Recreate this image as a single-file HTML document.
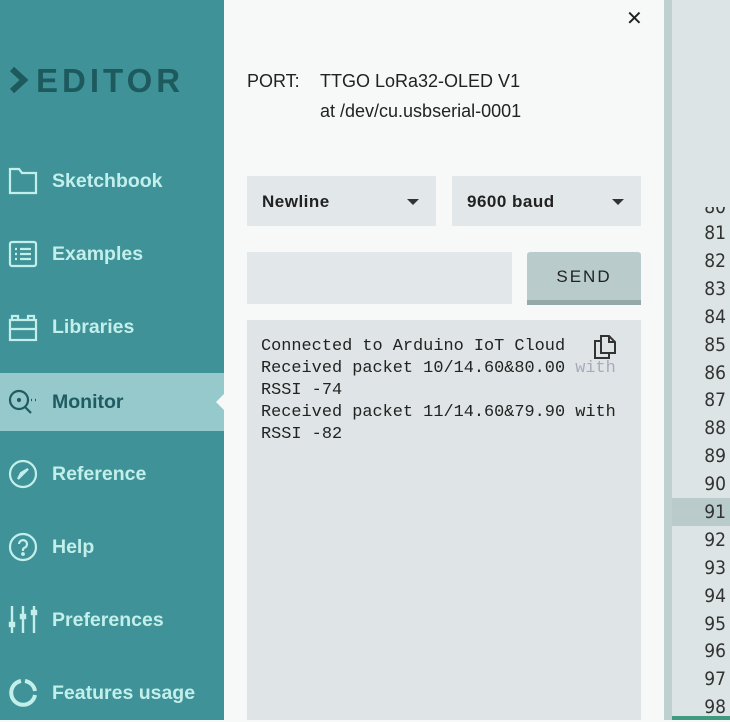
<!DOCTYPE html>
<html><head><style>
*{margin:0;padding:0;box-sizing:border-box}
body{width:730px;height:720px;overflow:hidden;position:relative;font-family:"Liberation Sans",sans-serif;background:#f7f9f9}
#side{position:absolute;left:0;top:0;width:224px;height:720px;background:#3f9298}
.logo{position:absolute;left:8px;top:62px;font-size:33px;font-weight:bold;color:#1d5a5e;letter-spacing:4px}
.item{position:absolute;left:0;width:224px;height:58px;color:#c3efeb;font-weight:bold;font-size:19.5px}
.item span{position:absolute;left:52px;top:18px}
.item svg{position:absolute;left:8px;top:14px}
.sel{background:#95c9cc;color:#1f5c62}
.sel:after{content:"";position:absolute;right:0;top:21px;border:8px solid transparent;border-right-color:#f7f9f9}
#panel{position:absolute;left:224px;top:0;width:440px;height:720px;background:#f7f9f9}
.t{position:absolute;font-size:18px;color:#222}
.dd{position:absolute;top:176px;width:189px;height:50px;background:#e2e8e9;font-weight:bold;font-size:17px;color:#222;padding:16px 15px;letter-spacing:.5px}
.dd:after{content:"";position:absolute;right:17px;top:23px;border:6px solid transparent;border-top-color:#333;border-bottom:0}
#out{position:absolute;left:247px;top:320px;width:394px;height:400px;background:#dfe5e6;font-family:"Liberation Mono",monospace;font-size:16.9px;color:#222;padding:16px 14px;line-height:22px;white-space:pre}
#div{position:absolute;left:664px;top:0;width:8px;height:720px;background:#bfd0d1}
#gut{position:absolute;left:672px;top:0;width:58px;height:720px;background:#dde4e5}
.n{position:absolute;right:4px;font-size:19px;color:#333;font-family:"DejaVu Sans Condensed","Liberation Sans",sans-serif}
</style></head><body>
<div id="side">
<div class="logo"><svg width="22" height="28" viewBox="0 0 22 28" style="vertical-align:-2px;margin-right:6px"><path d="M4 3l12 11-12 11" stroke="#1d5a5e" stroke-width="6" fill="none"/></svg>EDITOR</div>
<div class="item" style="top:152px"><svg width="30" height="30" viewBox="0 0 30 30" fill="none" stroke="#c3efeb" stroke-width="2.2"><path d="M2 3h9l3 4h14v20H2z"/></svg><span>Sketchbook</span></div>
<div class="item" style="top:225px"><svg width="30" height="30" viewBox="0 0 30 30" fill="none" stroke="#c3efeb" stroke-width="2.2"><rect x="2" y="3" width="26" height="24" rx="2"/><path d="M7 10h2M12 10h11M7 15h2M12 15h11M7 20h2M12 20h11"/></svg><span>Examples</span></div>
<div class="item" style="top:298px"><svg width="30" height="30" viewBox="0 0 30 30" fill="none" stroke="#c3efeb" stroke-width="2.2"><path d="M4 8V4h6v4M20 8V4h6v4"/><rect x="2" y="8" width="26" height="20"/><path d="M2 17h26"/></svg><span>Libraries</span></div>
<div class="item sel" style="top:373px"><svg width="30" height="30" viewBox="0 0 30 30" fill="none" stroke="#1f5c62" stroke-width="2.2"><circle cx="11" cy="13" r="9"/><path d="M17 20l6 6"/><circle cx="11" cy="13" r="1" fill="#1f5c62"/><path d="M23 13h1M27 13h1"/></svg><span>Monitor</span></div>
<div class="item" style="top:445px"><svg width="30" height="30" viewBox="0 0 30 30" fill="none" stroke="#c3efeb" stroke-width="2.2"><circle cx="15" cy="15" r="13"/><path d="M20 10l-7 7-3 3 3-6z"/></svg><span>Reference</span></div>
<div class="item" style="top:518px"><svg width="30" height="30" viewBox="0 0 30 30" fill="none" stroke="#c3efeb" stroke-width="2.2"><circle cx="15" cy="15" r="13"/><path d="M11 12a4 4 0 1 1 5 4c-1 .5-1 1-1 3"/><circle cx="15" cy="22" r=".8" fill="#c3efeb"/></svg><span>Help</span></div>
<div class="item" style="top:591px"><svg width="30" height="30" viewBox="0 0 30 30" fill="none" stroke="#c3efeb" stroke-width="2.4"><path d="M4 1v16M4 22v6M15 1v8M15 14v14M26 1v4M26 10v18"/><rect x="2" y="18" width="4" height="3" fill="#c3efeb"/><rect x="13" y="10" width="4" height="3" fill="#c3efeb"/><rect x="24" y="6" width="4" height="3" fill="#c3efeb"/></svg><span>Preferences</span></div>
<div class="item" style="top:664px"><svg width="30" height="30" viewBox="0 0 30 30" fill="none" stroke="#c3efeb" stroke-width="4"><path d="M17 3a12 12 0 0 1 10 10M27 17a12 12 0 1 1-14-14"/></svg><span>Features usage</span></div>
</div>
<div id="panel"></div>
<div class="t" style="left:626px;top:6px;font-size:20px">✕</div>
<div class="t" style="left:247px;top:71px">PORT:</div>
<div class="t" style="left:320px;top:71px">TTGO LoRa32-OLED V1</div>
<div class="t" style="left:320px;top:101px">at /dev/cu.usbserial-0001</div>
<div class="dd" style="left:247px">Newline</div>
<div class="dd" style="left:452px">9600 baud</div>
<div style="position:absolute;left:247px;top:252px;width:265px;height:52px;background:#e2e8e9"></div>
<div style="position:absolute;left:527px;top:252px;width:114px;height:53px;background:#b9cbcb;border-bottom:5px solid #96a9a9;border-radius:3px 3px 0 0;font-size:17px;letter-spacing:2px;color:#222;text-align:center;line-height:50px">SEND</div>
<div id="out">Connected to Arduino IoT Cloud
Received packet 10/14.60&amp;80.00 <span style="color:#aab">with</span>
RSSI -74
Received packet 11/14.60&amp;79.90 with
RSSI -82</div>
<svg style="position:absolute;left:592px;top:334px" width="26" height="26" viewBox="0 0 26 26" fill="none" stroke="#333" stroke-width="2"><path d="M9 2h8l6 6v11H9z M17 2v6h6"/><path d="M9 7H3v17h14v-5"/></svg>
<div id="div"></div>
<div id="gut">
<div style="position:absolute;left:0;top:498px;width:58px;height:28px;background:#bacbcc"></div>
<div class="n" style="top:196px">80</div>
<div class="n" style="top:222px">81</div><div class="n" style="top:250px">82</div><div class="n" style="top:278px">83</div><div class="n" style="top:306px">84</div><div class="n" style="top:334px">85</div><div class="n" style="top:362px">86</div><div class="n" style="top:389px">87</div><div class="n" style="top:417px">88</div><div class="n" style="top:445px">89</div><div class="n" style="top:473px">90</div><div class="n" style="top:501px">91</div><div class="n" style="top:529px">92</div><div class="n" style="top:557px">93</div><div class="n" style="top:585px">94</div><div class="n" style="top:613px">95</div><div class="n" style="top:640px">96</div><div class="n" style="top:668px">97</div><div class="n" style="top:696px">98</div>
<div style="position:absolute;left:0;top:716px;width:58px;height:4px;background:#3f9a80"></div>
</div>
<div style="position:absolute;left:672px;top:0;width:58px;height:207px;background:#dde4e5"></div>
</body></html>
